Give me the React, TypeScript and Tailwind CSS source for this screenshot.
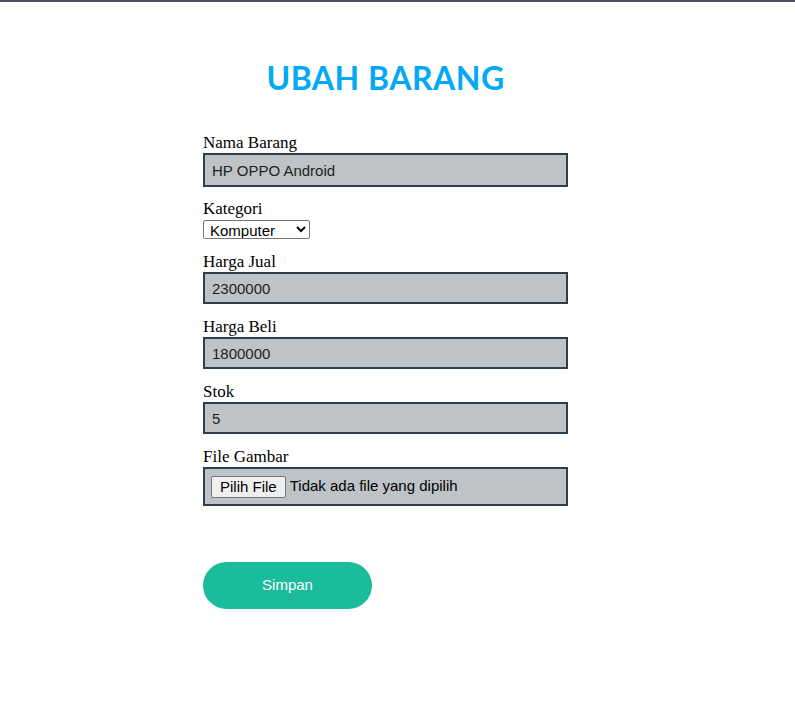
import React from "react";

const labelCls = "block text-[17px] leading-[20px] text-black";
const inputCls =
  "block w-[365px] h-[32px] border-2 border-[#2c3e50] bg-[#bdc3c7] pl-[7px] text-[15px] text-[#1f1f1f] outline-none";

export default function App() {
  return (
    <div className="min-h-[726px] w-full bg-white" style={{ fontFamily: '"Liberation Serif", serif' }}>
      <div className="h-[2px] w-full bg-[#4b4e5c]" />
      <div className="ml-[203px] w-[365px]">
        <h1
          className="mt-[54px] text-center text-[32px] font-bold leading-[44px] tracking-[0.5px] text-[#03a9f4]"
          style={{ fontFamily: 'Lato, "Open Sans", sans-serif' }}
        >
          UBAH BARANG
        </h1>
        <form className="mt-[33px]" style={{ fontFamily: '"Liberation Serif", serif' }}>
          <label className={labelCls}>Nama Barang</label>
          <input
            className={inputCls + " !h-[34px]"}
            defaultValue="HP OPPO Android"
            style={{ fontFamily: '"Liberation Sans", Arial, sans-serif' }}
          />
          <label className={labelCls + " mt-[12px]"}>Kategori</label>
          <select
            className="mt-[1px] block h-[19px] w-[107px] rounded-[2px] border border-[#767676] bg-white pl-[2px] text-[15px] leading-none text-black"
            style={{ fontFamily: '"Liberation Sans", Arial, sans-serif', appearance: "auto" }}
            defaultValue="Komputer"
          >
            <option>Komputer</option>
            <option>Handphone</option>
          </select>
          <label className={labelCls + " mt-[13px]"}>Harga Jual</label>
          <input
            className={inputCls}
            defaultValue="2300000"
            style={{ fontFamily: '"Liberation Sans", Arial, sans-serif' }}
          />
          <label className={labelCls + " mt-[13px]"}>Harga Beli</label>
          <input
            className={inputCls}
            defaultValue="1800000"
            style={{ fontFamily: '"Liberation Sans", Arial, sans-serif' }}
          />
          <label className={labelCls + " mt-[13px]"}>Stok</label>
          <input
            className={inputCls}
            defaultValue="5"
            style={{ fontFamily: '"Liberation Sans", Arial, sans-serif' }}
          />
          <label className={labelCls + " mt-[13px]"}>File Gambar</label>
          <div
            className="flex h-[39px] w-[365px] items-center border-2 border-[#2c3e50] bg-[#bdc3c7] pl-[6px] text-[15px] text-black"
            style={{ fontFamily: '"Liberation Sans", Arial, sans-serif' }}
          >
            <span className="flex h-[22px] items-center rounded-[2px] border border-[#767676] bg-[#efefef] px-[8px] text-[15px] leading-none">
              Pilih File
            </span>
            <span className="ml-[4px]">Tidak ada file yang dipilih</span>
          </div>
          <button
            type="button"
            className="mt-[56px] block h-[47px] w-[169px] rounded-full bg-[#1abc9c] text-[15px] text-white"
            style={{ fontFamily: '"Liberation Sans", Arial, sans-serif' }}
          >
            Simpan
          </button>
        </form>
      </div>
    </div>
  );
}
